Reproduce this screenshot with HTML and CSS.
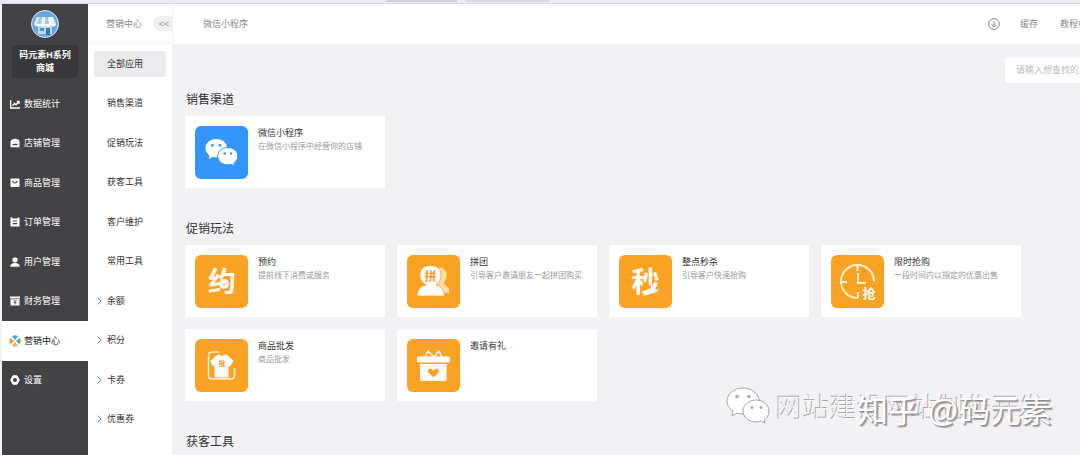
FILE: index.html
```html
<!DOCTYPE html>
<html lang="zh-CN">
<head>
<meta charset="utf-8">
<title>营销中心</title>
<link rel="stylesheet" href="styles.css">
</head>
<body>
<div class="tabstrip"><span class="tab"></span><span class="tab tab-light"></span></div>
<div class="app">
  <aside class="sidebar">
    <svg class="avatar" viewBox="0 0 28 28">
      <circle cx="14" cy="14" r="13.5" fill="#6ba6e0" stroke="#d5e6f7"/>
      <path d="M7 13h14v11H7z" fill="#b9daf5"/>
      <path d="M6 7h16l3 7H3z" fill="#eaf5ff"/>
      <path d="M8 7h3l-1 7H6zM14 7h3l1 7h-4z" fill="#9ccbf0"/>
      <path d="M3 14h22c0 3-4 3-5 1-1 2-4 2-5 0-1 2-4 2-5 0-1 2-6 2-7-1z" fill="#fff"/>
      <path d="M15 18h4v7h-4z" fill="#3a78b4"/><path d="M9 18h4v3H9z" fill="#4f93d0"/>
    </svg>
    <div class="shop-name">码元素H系列<br>商城</div>
    <nav class="menu">
      <a class="menu-item" href="#"><svg class="icon" viewBox="0 0 10 10"><path d="M.7 1v8H10M2.5 6.8 4.5 4.5 6 5.8 8.8 2.8M6.8 2.5h2.3v2.2" fill="none" stroke="#fff" stroke-width="1.3"/></svg>数据统计</a>
      <a class="menu-item" href="#"><svg class="icon" viewBox="0 0 10 10"><path d="M.5 9.300V4Q1 .7 5 .7T9.500 4v5.300z" fill="#fff"/><path d="M2.500 6.500h5" stroke="#434244" stroke-width="1.300"/></svg>店铺管理</a>
      <a class="menu-item" href="#"><svg class="icon" viewBox="0 0 10 10"><rect x=".5" y=".5" width="9" height="8.500" rx="1" fill="#fff"/><path d="M2.500 3Q5 7 7.500 3" fill="none" stroke="#434244" stroke-width="1.200"/></svg>商品管理</a>
      <a class="menu-item" href="#"><svg class="icon" viewBox="0 0 10 10"><path d="M.5.5H2.500v1h5v-1h2v9h-9z" fill="#fff"/><path d="M2.800 4h4.400M2.800 6.700h4.400" stroke="#434244" stroke-width="1.200"/></svg>订单管理</a>
      <a class="menu-item" href="#"><svg class="icon" viewBox="0 0 10 10"><circle cx="5" cy="2.800" r="2.600" fill="#fff"/><path d="M.3 9.700Q.3 6 5 6t4.700 3.700z" fill="#fff"/></svg>用户管理</a>
      <a class="menu-item" href="#"><svg class="icon" viewBox="0 0 10 10"><path d="M0 .5h10v2H0zM.5 3.200h9v6.300h-9z" fill="#fff"/><path d="m3.500 4 1.500 1.800L6.500 4M5 5.800V8.500M3.500 6.700h3" fill="none" stroke="#434244" stroke-width=".8"/></svg>财务管理</a>
      <a class="menu-item menu-active" href="#"><svg class="icon icon-large" viewBox="0 0 12 12"><path d="M3 1.500 6 5l3-3.500Q6-.8 3 1.500z" fill="#55a4d8"/><path d="M10.500 3 7 6l3.500 3Q12.800 6 10.500 3z" fill="#4dac8d"/><path d="M9 10.500 6 7l-3 3.500Q6 12.800 9 10.500z" fill="#efb24f"/><path d="M1.500 9 5 6 1.500 3Q-.8 6 1.500 9z" fill="#ef9b3f"/></svg>营销中心</a>
      <a class="menu-item" href="#"><svg class="icon" viewBox="0 0 10 10"><path d="M3 .8h4L9.300 5 7 9.200H3L.7 5z" fill="#fff" stroke="#fff" stroke-linejoin="round"/><circle cx="5" cy="5" r="2" fill="#434244"/></svg>设置</a>
    </nav>
  </aside>

  <aside class="submenu">
    <header class="submenu-head"><span>营销中心</span><button class="collapse" type="button">&lt;&lt;</button></header>
    <nav class="sub-list">
      <a class="sub-item" href="#"><span class="sub-current">全部应用</span></a>
      <a class="sub-item" href="#">销售渠道</a>
      <a class="sub-item" href="#">促销玩法</a>
      <a class="sub-item" href="#">获客工具</a>
      <a class="sub-item" href="#">客户维护</a>
      <a class="sub-item" href="#">常用工具</a>
      <a class="sub-item expandable" href="#"><svg class="chevron" viewBox="0 0 5 8"><path d="m.7.700 3.300 3.300L.7 7.300"/></svg>余额</a>
      <a class="sub-item expandable" href="#"><svg class="chevron" viewBox="0 0 5 8"><path d="m.7.700 3.300 3.300L.7 7.300"/></svg>积分</a>
      <a class="sub-item expandable" href="#"><svg class="chevron" viewBox="0 0 5 8"><path d="m.7.700 3.300 3.300L.7 7.300"/></svg>卡券</a>
      <a class="sub-item expandable" href="#"><svg class="chevron" viewBox="0 0 5 8"><path d="m.7.700 3.300 3.300L.7 7.300"/></svg>优惠券</a>
    </nav>
  </aside>

  <main class="main">
    <header class="topbar">
      <span>微信小程序</span>
      <div class="tools">
        <svg class="download" viewBox="0 0 12 12"><circle cx="6" cy="6" r="5.400"/><path d="M6 2.800v6M3.800 6.600 6 8.800l2.200-2.200"/></svg>
        <a href="#">缓存</a>
        <a href="#">教程中心</a>
      </div>
    </header>
    <div class="search-row"><input class="search" type="text" aria-label="搜索应用" placeholder="请输入想查找的应用名称"></div>
    <section class="group">
      <h2>销售渠道</h2>
      <div class="cards">
        <article class="card">
          <svg class="tile" viewBox="0 0 53 53"><rect width="53" height="53" rx="6" fill="#3296fa"/><path d="M21.500 13C15 13 10.500 17 10.500 22.300c0 3 1.500 5.500 4 7.200L13.800 33l4-2.200q1.800.5 4.500.5C28 31 32 27.500 32 22.300S28 13 21.500 13z" fill="#fff"/><path d="M33 21.500c-6 0-10.300 3.800-10.300 8.700S27 38.800 33 38.800q1.800 0 3.400-.5l3.100 1.800-.7-3c2.400-1.600 4-4 4-6.900 0-4.900-4.200-8.700-9.800-8.700z" fill="#fff" stroke="#3296fa"/><g fill="#3296fa"><circle cx="17.500" cy="19.300" r="1.400"/><circle cx="25" cy="19.300" r="1.400"/><circle cx="29.700" cy="27.500" r="1.200"/><circle cx="36" cy="27.500" r="1.200"/></g></svg>
          <div><h3>微信小程序</h3><p>在微信小程序中经营你的店铺</p></div>
        </article>
      </div>
    </section>
    <section class="group">
      <h2>促销玩法</h2>
      <div class="cards">
        <article class="card">
          <svg class="tile" viewBox="0 0 53 53"><rect width="53" height="53" rx="6" fill="#faa224"/><text class="glyph" x="27" y="37" font-size="28">约</text><circle cx="29" cy="29" r="5" fill="#fff"/><path d="m27 28.500 2 2 3-3" fill="none" stroke="#faa224"/></svg>
          <div><h3>预约</h3><p>提前线下消费或服务</p></div>
        </article>
        <article class="card">
          <svg class="tile" viewBox="0 0 53 53"><rect width="53" height="53" rx="6" fill="#faa224"/><path d="M32 12c8 1 10 9 5 15q0 3 5 6v5h-7l-6-12q7-6 3-14z" fill="#fddda6"/><path d="M10 41c0-6 4-10 9-11-4-3-6-5-6-10 0-6 4-9.500 10.500-9.500S34 14 34 20c0 5-2 7-5 10 5 1 8.500 5 8.500 11z" fill="#fff" stroke="#faa224" stroke-width=".8"/><text class="glyph glyph-orange" x="23.500" y="26" font-size="12">拼</text></svg>
          <div><h3>拼团</h3><p>引导客户邀请朋友一起拼团购买</p></div>
        </article>
        <article class="card">
          <svg class="tile" viewBox="0 0 53 53"><rect width="53" height="53" rx="6" fill="#faa224"/><text class="glyph" x="26.500" y="37" font-size="28">秒</text><path d="m24 41 9-8-2-1 7-3-2 6 4-1-2 3z" fill="#fff"/></svg>
          <div><h3>整点秒杀</h3><p>引导客户快速抢购</p></div>
        </article>
        <article class="card">
          <svg class="tile" viewBox="0 0 53 53"><rect width="53" height="53" rx="6" fill="#faa224"/><g fill="none" stroke="#fff2cf" stroke-width="2"><path d="M27 43A16.500 16.500 0 1 1 43 26.500"/><path d="M26.500 10v6M10 27h6M27 37v6M27 18v10h8"/></g><text class="glyph" x="38" y="43" font-size="13">抢</text></svg>
          <div><h3>限时抢购</h3><p>一段时间内以指定的优惠出售</p></div>
        </article>
        <article class="card">
          <svg class="tile" viewBox="0 0 53 53"><rect width="53" height="53" rx="6" fill="#faa224"/><path d="M24 13h-7q-3.500 0-3.500 3.500v20q0 3.500 3.500 3.500h19q3.500 0 3.500-3.500V29" fill="none" stroke="#fff2cf" stroke-width="1.500"/><path d="m21 17 3-1q3 3 6 0l3 1 5 5-3 5-2-1v12H20V26l-2 1-2-5z" fill="#fff" stroke="#fff" stroke-linejoin="round"/><text class="glyph glyph-orange" x="27" y="27" font-size="7">批</text></svg>
          <div><h3>商品批发</h3><p>商品批发</p></div>
        </article>
        <article class="card">
          <svg class="tile" viewBox="0 0 53 53"><rect width="53" height="53" rx="6" fill="#faa224"/><path d="m18 18 3-6 6 6 5-6 3 6" fill="none" stroke="#fff" stroke-width="1.500" stroke-linejoin="round"/><rect x="10" y="17.500" width="33" height="6" rx="1.500" fill="#fff"/><path d="M13 25h26.500v15q0 2-2 2H15q-2 0-2-2z" fill="#fff"/><path d="m26.500 38.500-5-5c-2.500-3 2-5.500 5-2 3-3.500 7.500-1 5 2z" fill="#faa224"/></svg>
          <div><h3>邀请有礼</h3></div>
        </article>
      </div>
    </section>
    <section class="group"><h2>获客工具</h2></section>
  </main>
</div>
<div class="watermark">
  <svg class="wm-logo" viewBox="0 0 44 38"><g fill="#fff" stroke="#a5a3a7"><path d="M17 1C8 1 1 7 1 14c0 4 2 7.500 6 10l-1 5 5-3q3 1 6 1c9 0 16-6 16-13S26 1 17 1z"/><path d="M30 13c-7 0-13 5-13 11s6 11 13 11q3 0 5-1l4 2-1-3c3-2 5-5 5-9 0-6-6-11-13-11z"/></g><g fill="#aaa8ac"><circle cx="11" cy="9.500" r="1.800"/><circle cx="23" cy="9.500" r="1.800"/><circle cx="26" cy="20.500" r="1.500"/><circle cx="35" cy="20.500" r="1.500"/></g></svg>
  <span class="wm-account">网站建设网站制作开发</span>
  <span class="wm-author">知乎 @码元素</span>
</div>
</body>
</html>
```
FILE: styles.css
```css
* { box-sizing: border-box; }
body {
  margin: 0;
  height: 100vh;
  display: flex;
  flex-direction: column;
  position: relative;
  overflow: hidden;
  background: #f2f2f4;
  color: #333;
  font-family: "Liberation Sans", "Noto Sans CJK SC", sans-serif;
  font-size: 9px;
  line-height: 14px;
}
a { color: inherit; text-decoration: none; }
h2, h3, p { margin: 0; font-weight: 400; }

.tabstrip {
  flex: none;
  display: flex;
  gap: 8px;
  height: 4px;
  padding-left: 386px;
  background: #ebebf8;
  border-bottom: 1px solid #d9d9e4;
}
.tab { width: 71px; height: 2px; background: #cfcfdc; }
.tab-light { width: 84px; background: #dadae6; }

.app { display: flex; flex: 1; min-height: 0; padding-left: 2px; overflow: hidden; }

.sidebar {
  flex: none;
  display: flex;
  flex-direction: column;
  align-items: center;
  width: 86px;
  padding-top: 6px;
  background: #434244;
  color: #fff;
}
.avatar { flex: none; width: 28px; height: 28px; }
.shop-name {
  width: 66px;
  margin: 7px 0 6px;
  padding: 4px 0 3px;
  border-radius: 3px;
  background: #39383a;
  font-weight: 700;
  line-height: 13px;
  text-align: center;
}
.menu { flex: none; display: flex; flex-direction: column; width: 100%; height: 316px; }
.menu-item { flex: 1; display: flex; align-items: center; gap: 4px; padding-left: 8px; }
.menu-active { gap: 3px; padding-left: 7px; background: #fff; color: #222; }
.icon { width: 10px; height: 10px; }
.icon-large { width: 12px; height: 12px; }

.submenu { flex: none; width: 85px; overflow: hidden; border-right: 1px solid #efeff1; background: #fff; }
.submenu-head {
  display: flex;
  align-items: center;
  justify-content: space-between;
  height: 40px;
  padding-left: 18px;
  border-bottom: 1px solid #f2f2f3;
  color: #888;
}
.collapse {
  width: 19px;
  height: 15px;
  padding: 0 0 0 3px;
  border: 0;
  border-radius: 8px 0 0 8px;
  background: #f0f0f1;
  color: #999;
  font: inherit;
}
.sub-list { display: flex; flex-direction: column; height: 395px; }
.sub-item { flex: 1; display: flex; align-items: center; padding-left: 19px; }
.sub-current { width: 72px; margin-left: -13px; padding: 6px 13px; border-radius: 2px; background: #ebebed; }
.expandable { gap: 5px; padding-left: 9px; }
.chevron { width: 5px; height: 8px; fill: none; stroke: #888; stroke-width: 1; }

/* The workspace continues past the right edge of the window. */
.main { flex: none; width: calc(100vw - 93px); }
.topbar {
  display: flex;
  align-items: center;
  justify-content: space-between;
  height: 40px;
  padding: 0 64px 0 30px;
  background: #fff;
  color: #888;
}
.tools { display: flex; align-items: center; gap: 22px; }
.tools a { flex: none; }
.download { width: 12px; height: 12px; margin-right: -2px; fill: none; stroke: #888; stroke-width: 1; }
.search-row { display: flex; justify-content: flex-end; padding: 13px 15px 8px; }
.search {
  width: 140px;
  height: 26px;
  padding: 0 11px;
  border: 0;
  border-radius: 3px;
  background: #fff;
  font: inherit;
}
.search::placeholder { color: #bbb; opacity: 1; }

.group { padding: 0 12px; margin-bottom: 32px; }
.group h2 { padding: 1px 1px 7px; font-size: 12px; line-height: 17px; }
.cards { display: flex; flex-wrap: wrap; gap: 12px; padding-right: 80px; }
.card {
  display: flex;
  gap: 10px;
  width: 200px;
  height: 72px;
  padding: 10px;
  background: #fff;
}
.tile { flex: none; width: 53px; height: 53px; }
.card h3 { font-size: 9px; line-height: 14px; }
.card p { color: #999; font-size: 8px; line-height: 14px; white-space: nowrap; }
.glyph { fill: #fff; font-weight: 700; text-anchor: middle; }
.glyph-orange { fill: #f09a2c; }

.watermark {
  position: absolute;
  right: 28px;
  bottom: 24px;
  display: flex;
  align-items: center;
  gap: 6px;
  padding-right: 6px;
  color: #fff;
  line-height: 44px;
  text-shadow: 1px 1px 1px #8d8b90;
}
.wm-logo { width: 44px; height: 38px; margin-bottom: 6px; }
.wm-account { color: #f7f6f8; font-size: 27px; font-weight: 300; text-shadow: -1px -1px 0 #aaa8ac; }
.wm-author { position: absolute; top: 3px; right: 0; font-size: 31px; white-space: nowrap; text-shadow: 1px 1px 1px #8d8b90, 2px 2px 1px #aaa8ac; }
```
